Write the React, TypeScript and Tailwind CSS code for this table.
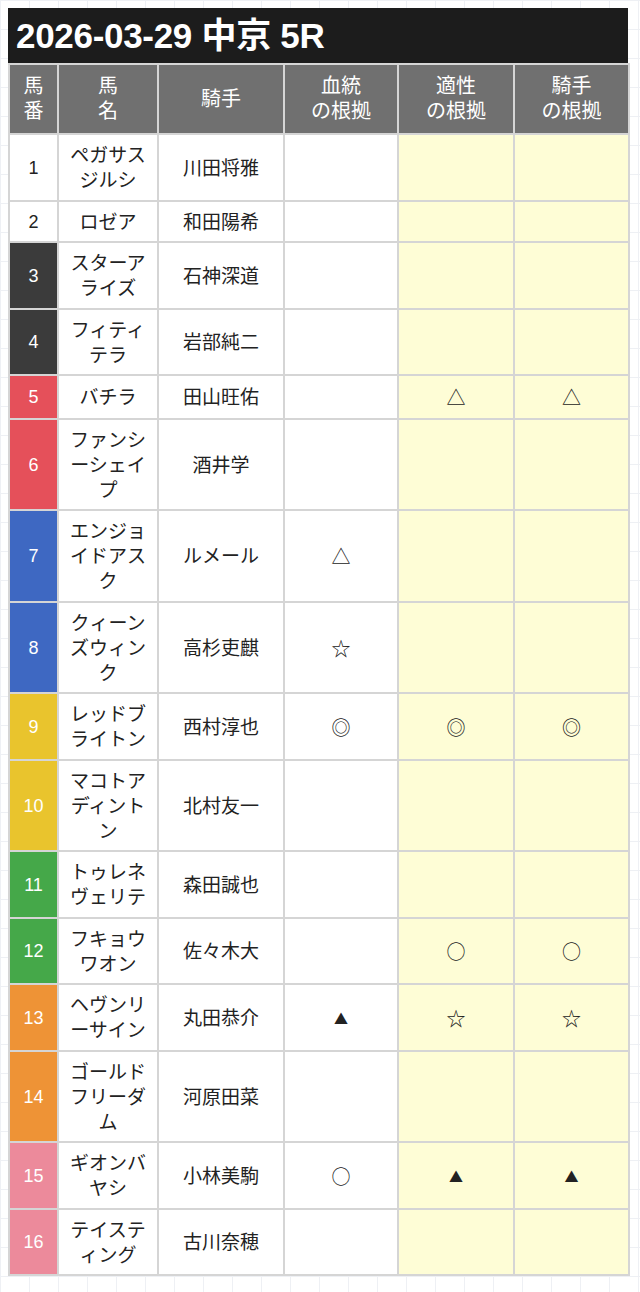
import React from "react";

type Row = {
  no: number;
  name: string[];
  jockey: string;
  blood?: string;
  fit?: string;
  jock?: string;
};

// 枠色 (1-2 white, 3-4 black, 5-6 red ...)
const frameClass: Record<number, string> = {
  1: "bg-white text-[#222]",
  2: "bg-white text-[#222]",
  3: "bg-[#3b3b3b] text-white",
  4: "bg-[#3b3b3b] text-white",
  5: "bg-[#e5505a] text-white",
  6: "bg-[#e5505a] text-white",
  7: "bg-[#3e68c2] text-white",
  8: "bg-[#3e68c2] text-white",
  9: "bg-[#e9c42d] text-white",
  10: "bg-[#e9c42d] text-white",
  11: "bg-[#45a849] text-white",
  12: "bg-[#45a849] text-white",
  13: "bg-[#ee9336] text-white",
  14: "bg-[#ee9336] text-white",
  15: "bg-[#ec8a9b] text-white",
  16: "bg-[#ec8a9b] text-white",
};

const rows: Row[] = [
  { no: 1, name: ["ペガサス", "ジルシ"], jockey: "川田将雅" },
  { no: 2, name: ["ロゼア"], jockey: "和田陽希" },
  { no: 3, name: ["スターア", "ライズ"], jockey: "石神深道" },
  { no: 4, name: ["フィティ", "テラ"], jockey: "岩部純二" },
  { no: 5, name: ["バチラ"], jockey: "田山旺佑", fit: "△", jock: "△" },
  { no: 6, name: ["ファンシ", "ーシェイ", "プ"], jockey: "酒井学" },
  { no: 7, name: ["エンジョ", "イドアス", "ク"], jockey: "ルメール", blood: "△" },
  { no: 8, name: ["クィーン", "ズウィン", "ク"], jockey: "高杉吏麒", blood: "☆" },
  { no: 9, name: ["レッドブ", "ライトン"], jockey: "西村淳也", blood: "◎", fit: "◎", jock: "◎" },
  { no: 10, name: ["マコトア", "ディント", "ン"], jockey: "北村友一" },
  { no: 11, name: ["トゥレネ", "ヴェリテ"], jockey: "森田誠也" },
  { no: 12, name: ["フキョウ", "ワオン"], jockey: "佐々木大", fit: "○", jock: "○" },
  { no: 13, name: ["ヘヴンリ", "ーサイン"], jockey: "丸田恭介", blood: "▲", fit: "☆", jock: "☆" },
  { no: 14, name: ["ゴールド", "フリーダ", "ム"], jockey: "河原田菜" },
  { no: 15, name: ["ギオンバ", "ヤシ"], jockey: "小林美駒", blood: "○", fit: "▲", jock: "▲" },
  { no: 16, name: ["テイステ", "ィング"], jockey: "古川奈穂" },
];

const border = "border-2 border-[#d5d5d5] px-1 text-center align-middle";
const cell = `${border} pt-[8px] pb-[6.5px]`;
const head = `${border} py-[9px] font-normal`;

function Mark({ v }: { v?: string }) {
  if (!v) return null;
  return (
    <span className={`font-['Noto_Sans_CJK_JP',sans-serif] ${v === "▲" ? "text-[14px]" : "text-[19px]"}`}>
      {v}
    </span>
  );
}

export default function App() {
  return (
    <div className="min-h-[1292px] w-[640px] bg-white bg-[linear-gradient(to_right,#eef0f4_1px,transparent_1px),linear-gradient(to_bottom,#eef0f4_1px,transparent_1px)] bg-[size:29px_29px] pt-2 font-['Liberation_Sans','Noto_Sans_CJK_JP',sans-serif] text-[#222]">
      <div className="ml-2 w-[620px]">
        <div className="flex h-[55px] items-center bg-[#1c1c1c] pl-2 pt-[2px] text-[35px] font-bold tracking-[-0.3px] text-white">
          2026-03-29 中京 5R
        </div>
        <table className="w-full table-fixed border-collapse border-2 border-[#d5d5d5] leading-[25px]">
          <colgroup>
            <col className="w-[49px]" />
            <col className="w-[100px]" />
            <col className="w-[126px]" />
            <col className="w-[114px]" />
            <col className="w-[116px]" />
            <col className="w-[115px]" />
          </colgroup>
          <thead>
            <tr className="bg-[#707070] text-[20px] text-white">
              <th className={head}>馬<br />番</th>
              <th className={head}>馬<br />名</th>
              <th className={head}>騎手</th>
              <th className={head}>血統<br />の根拠</th>
              <th className={head}>適性<br />の根拠</th>
              <th className={head}>騎手<br />の根拠</th>
            </tr>
          </thead>
          <tbody className="text-[19px]">
            {rows.map((r) => (
              <tr key={r.no}>
                <td className={`${cell} text-[18px] ${frameClass[r.no]}`}>{r.no}</td>
                <td className={`${cell} bg-white`}>
                  {r.name.map((n, i) => (
                    <div key={i}>{n}</div>
                  ))}
                </td>
                <td className={`${cell} bg-white`}>{r.jockey}</td>
                <td className={`${cell} bg-white`}>
                  <Mark v={r.blood} />
                </td>
                <td className={`${cell} bg-[#fefdd6]`}>
                  <Mark v={r.fit} />
                </td>
                <td className={`${cell} bg-[#fefdd6]`}>
                  <Mark v={r.jock} />
                </td>
              </tr>
            ))}
          </tbody>
        </table>
      </div>
    </div>
  );
}
